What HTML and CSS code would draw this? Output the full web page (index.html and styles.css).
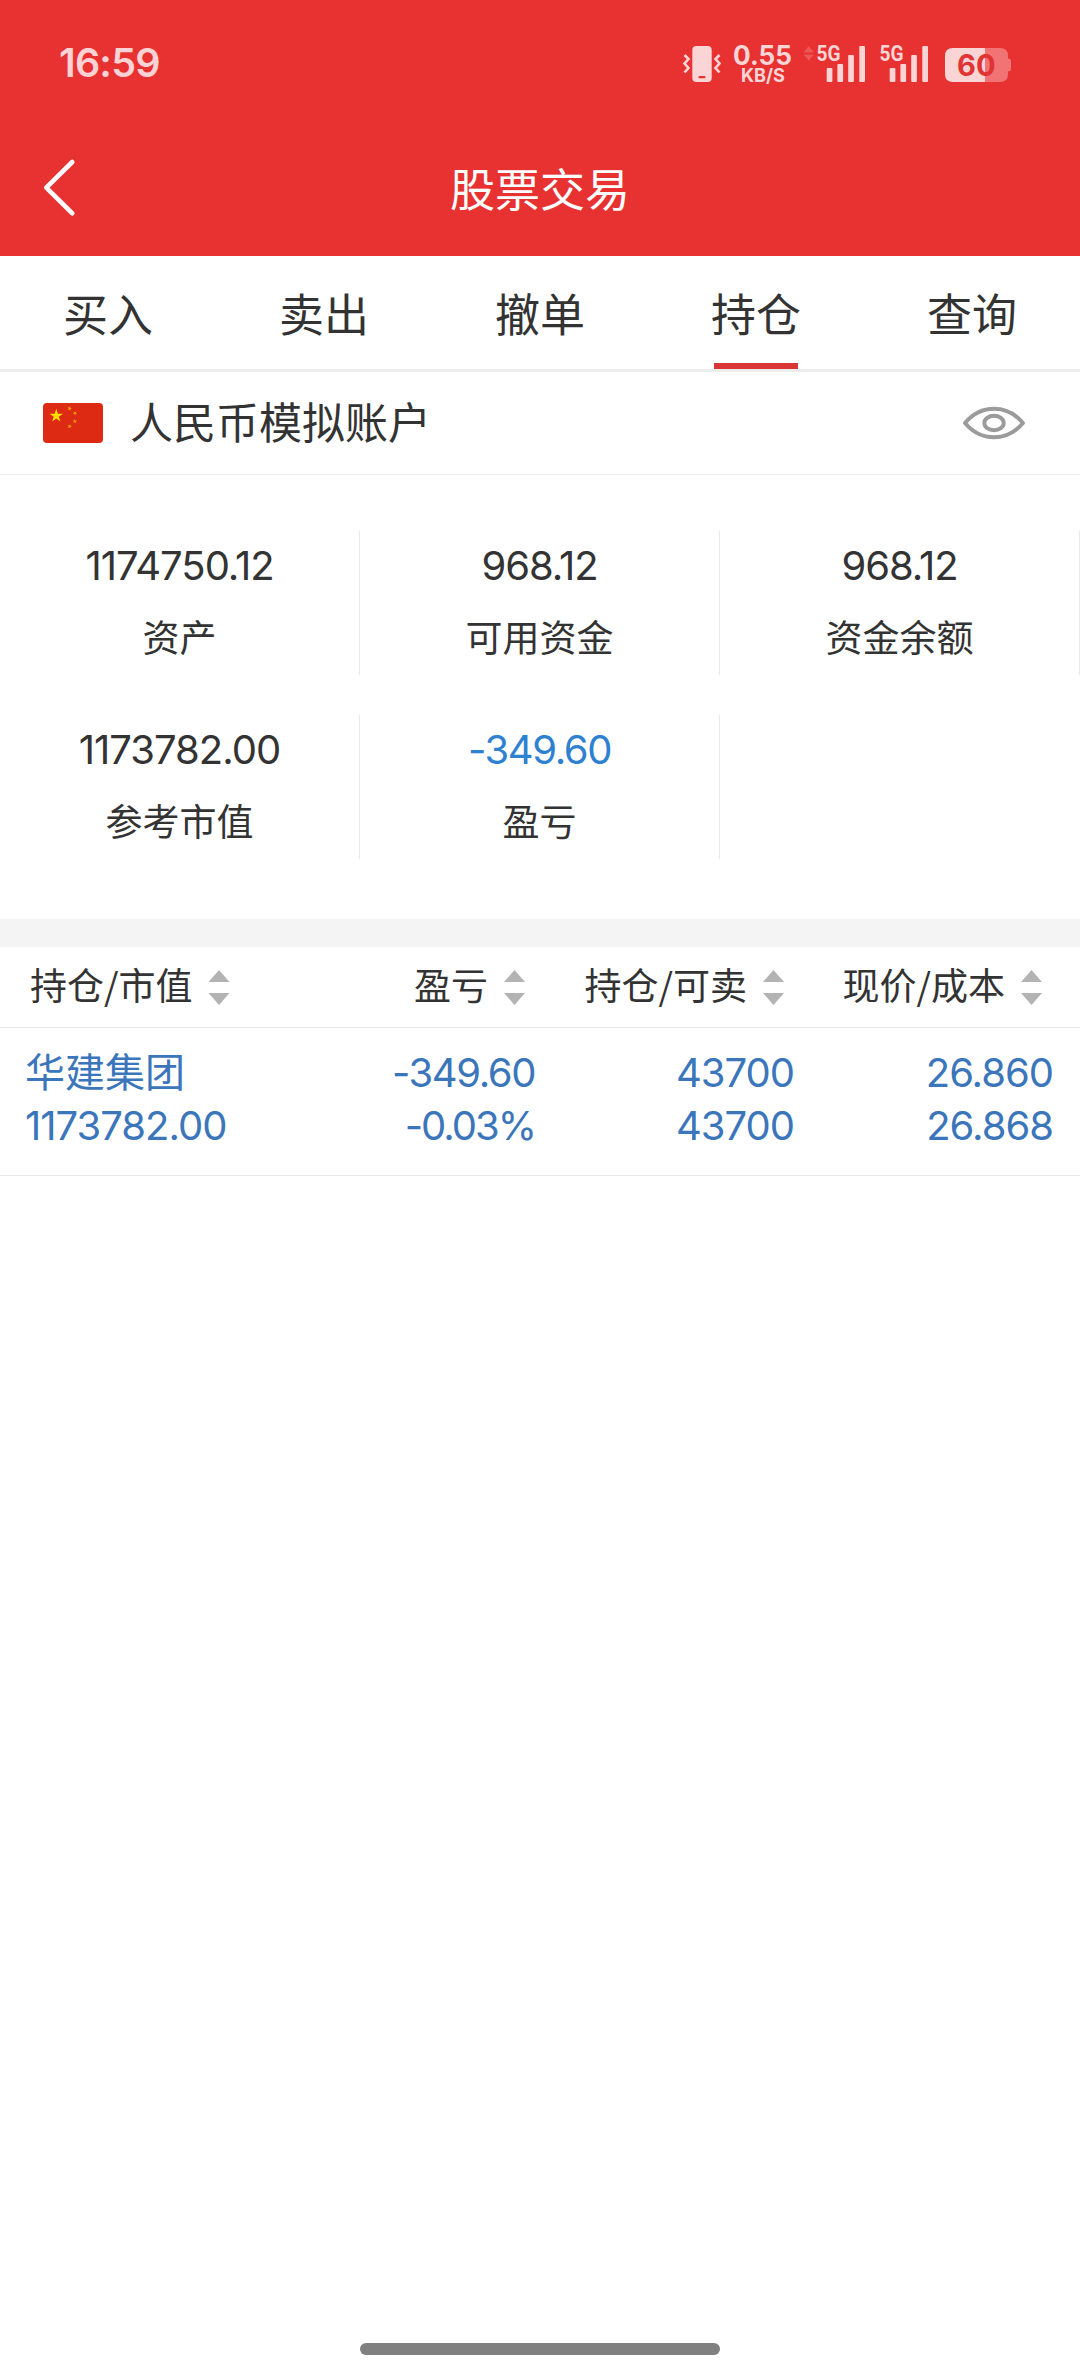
FILE: index.html
```html
<!DOCTYPE html>
<html lang="zh-CN">
<head>
<meta charset="utf-8">
<title>股票交易</title>
<link rel="stylesheet" href="styles.css">
</head>
<body>
<div class="screen">
  <header class="top">
    <div class="status">
      <span class="clock">16:59</span>
      <svg class="status-icons" width="340" height="50" viewBox="680 40 340 50">
        <rect x="692.3" y="46" width="19.4" height="36" rx="4" fill="#fbd5d5"/>
        <rect x="698.5" y="76" width="7" height="2.2" rx="1" fill="#e83131"/>
        <path d="M684.5 55l4 4-4 4.500 4 4.500-4 4.500M719.500 55l-4 4 4 4.500-4 4.500 4 4.500" fill="none" stroke="#fbd5d5" stroke-width="2.600"/>
        <text x="733" y="65.300" font-size="26.500" font-weight="700" textLength="59" lengthAdjust="spacingAndGlyphs">0.55</text>
        <text x="741" y="82" font-size="18.500" font-weight="700" textLength="44" lengthAdjust="spacingAndGlyphs">KB/S</text>
        <path d="M803.500 52.500l5.200-6.500 5.200 6.500zM803.500 54.500l5.200 6 5.200-6z" fill="#ee5757"/>
        <text class="net" x="816.500" y="61" font-size="21.500" font-weight="700" textLength="24" lengthAdjust="spacingAndGlyphs">5G</text>
        <g fill="#fbd5d5">
          <rect x="826.700" y="68" width="5.700" height="14" rx="1"/>
          <rect x="837.400" y="64" width="5.700" height="18" rx="1"/>
          <rect x="848.200" y="55" width="5.700" height="27" rx="1"/>
          <rect x="859.300" y="46" width="5.700" height="36" rx="1"/>
        </g>
        <text class="net" x="879.500" y="61" font-size="21.500" font-weight="700" textLength="24" lengthAdjust="spacingAndGlyphs">5G</text>
        <g fill="#fbd5d5">
          <rect x="889.700" y="68" width="5.700" height="14" rx="1"/>
          <rect x="900.400" y="64" width="5.700" height="18" rx="1"/>
          <rect x="911.200" y="55" width="5.700" height="27" rx="1"/>
          <rect x="922.300" y="46" width="5.700" height="36" rx="1"/>
        </g>
        <path d="M985 48h15q8 0 8 8v2.500q3 0 3 3v7q0 3-3 3v2.500q0 8-8 8h-15z" fill="#f17373"/>
        <path d="M985 48h-32q-8 0-8 8v18q0 8 8 8h32z" fill="#fbd5d5"/>
        <text class="level" x="957" y="76.300" font-size="30" font-weight="700" textLength="38.500" lengthAdjust="spacingAndGlyphs">60</text>
      </svg>
    </div>
    <div class="nav">
      <svg class="back" width="36" height="60" viewBox="40 158 36 60"><path d="M72.300 162L46.300 187.700l26 25.700" fill="none" stroke="#fff" stroke-width="4.600" stroke-linecap="round" stroke-linejoin="round"/></svg>
      <h1 class="title">股票交易</h1>
    </div>
  </header>

  <nav class="tabs">
    <a class="tab">买入</a>
    <a class="tab">卖出</a>
    <a class="tab">撤单</a>
    <a class="tab active">持仓</a>
    <a class="tab">查询</a>
  </nav>

  <section class="account">
    <svg class="flag" width="60" height="40" viewBox="43 403 60 40">
      <defs><path id="star" d="M0-1L.2245-.309.951-.309.363.118.588.809 0 .382-.588.809-.363.118-.951-.309-.2245-.309z"/></defs>
      <rect x="43" y="403" width="60" height="40" rx="4" fill="#dd2a12"/>
      <use href="#star" transform="translate(56.300 415.800) scale(7)" fill="#ffde00"/>
      <g fill="#f5990f">
        <use href="#star" transform="translate(69.600 408.500) rotate(20) scale(2.500)"/>
        <use href="#star" transform="translate(75 413.300) rotate(40) scale(2.500)"/>
        <use href="#star" transform="translate(74.800 421.300) scale(2.500)"/>
        <use href="#star" transform="translate(69.600 426.300) rotate(20) scale(2.500)"/>
      </g>
    </svg>
    <span class="account-name">人民币模拟账户</span>
    <svg class="eye" width="64" height="40" viewBox="962 409 64 40">
      <g fill="none" stroke="#9b9b9b" stroke-width="3.900" stroke-linejoin="round">
        <path d="M965 429C981 410 1007 410 1023 429C1007 448 981 448 965 429z"/>
        <ellipse cx="994" cy="429" rx="9.700" ry="7.200"/>
      </g>
    </svg>
  </section>

  <section class="summary">
    <div class="cell"><span class="value">1174750.12</span><span class="label">资产</span></div>
    <div class="cell"><span class="value">968.12</span><span class="label">可用资金</span></div>
    <div class="cell"><span class="value">968.12</span><span class="label">资金余额</span></div>
    <div class="cell"><span class="value">1173782.00</span><span class="label">参考市值</span></div>
    <div class="cell"><span class="value loss">-349.60</span><span class="label">盈亏</span></div>
  </section>

  <section class="holdings">
    <div class="row head">
      <div class="col c1">持仓/市值<i class="sort"></i></div>
      <div class="col c2">盈亏<i class="sort"></i></div>
      <div class="col c3">持仓/可卖<i class="sort"></i></div>
      <div class="col c4">现价/成本<i class="sort"></i></div>
    </div>
    <div class="row item">
      <div class="col c1"><span class="stock">华建集团</span><span class="num">1173782.00</span></div>
      <div class="col c2"><span class="num signed">-349.60</span><span class="num percent">-0.03%</span></div>
      <div class="col c3"><span class="num">43700</span><span class="num">43700</span></div>
      <div class="col c4"><span class="num">26.860</span><span class="num">26.868</span></div>
    </div>
  </section>

  <div class="home-bar"></div>
</div>
</body>
</html>
```
FILE: styles.css
```css
* { box-sizing: border-box; }
body {
  margin: 0;
  background: #fff;
  color: #333;
  font-family: "Noto Sans CJK SC", sans-serif;
}
.screen {
  width: 1080px;
  height: 2376px;
  display: flex;
  flex-direction: column;
  overflow: hidden;
}

.top { height: 256px; background: #e83131; }
.status {
  height: 119px;
  padding: 40px 60px 0 59px;
  display: flex;
  justify-content: space-between;
}
.clock {
  font: 600 39.5px/47px Inter, sans-serif;
  letter-spacing: -0.8px;
  color: #ffd3d3;
}
.status-icons text { font-family: Inter, sans-serif; fill: #fbd5d5; }
.status-icons .net { font-family: Roboto, sans-serif; }
.status-icons .level { fill: #e03434; }
.nav {
  height: 137px;
  padding: 0 40px;
  display: grid;
  grid-template-columns: 36px 1fr 36px;
  align-items: center;
}
.title {
  margin: 0;
  text-align: center;
  color: #fff;
  font-size: 45px;
  font-weight: 400;
  line-height: 60px;
}

.tabs {
  height: 116px;
  display: flex;
  border-bottom: 3px solid #ededed;
}
.tab {
  flex: 1;
  display: flex;
  flex-direction: column;
  align-items: center;
  font-size: 45px;
  line-height: 113px;
}
.tab.active::after {
  content: "";
  width: 84px;
  height: 6px;
  margin-top: -6px;
  background: #d93636;
}

.account {
  height: 103px;
  padding: 0 54px 0 43px;
  display: flex;
  align-items: center;
  border-bottom: 1px solid #eee;
}
.account-name {
  flex: 1;
  margin-left: 27px;
  padding-bottom: 7px;
  font-size: 43px;
  line-height: 60px;
}

.summary {
  height: 444px;
  padding-top: 56px;
  display: grid;
  grid-template-columns: repeat(3, 360px);
  grid-auto-rows: 144px;
  row-gap: 40px;
}
.cell {
  padding-top: 13px;
  display: flex;
  flex-direction: column;
  align-items: center;
  border-right: 1px solid #e9e9e9;
}
.value, .num {
  font-family: Inter, sans-serif;
  font-size: 40px;
  letter-spacing: -1px;
}
.value { line-height: 44px; }
.value.loss { color: #2e80d0; }
.value.loss, .num.signed { letter-spacing: -1.4px; }
.num.percent { letter-spacing: -2px; }
.label { margin-top: 24px; font-size: 37px; line-height: 49px; }

.holdings { border-top: 28px solid #f4f4f4; }
.row {
  display: grid;
  grid-template-columns: 275px 260px 259px 286px;
  border-bottom: 1px solid #e9e9e9;
}
.col { display: flex; }
.head { height: 81px; font-size: 37px; line-height: 74px; }
.head .col { justify-content: flex-end; padding-right: 10px; }
.head .c1 { justify-content: flex-start; padding-left: 30px; }
.head .c4 { padding-right: 38px; }
.sort {
  width: 21px;
  height: 35px;
  margin: 23px 0 0 16px;
  display: flex;
  flex-direction: column;
  justify-content: space-between;
}
.sort::before, .sort::after {
  content: "";
  height: 12px;
  background: #b3b3b3;
}
.sort::before { clip-path: polygon(50% 0, 100% 100%, 0 100%); }
.sort::after { clip-path: polygon(0 0, 100% 0, 50% 100%); }

.item { height: 148px; padding-top: 18px; color: #3b76bb; }
.item .col { flex-direction: column; align-items: flex-end; }
.item .c1 { align-items: flex-start; padding-left: 25px; }
.item .c4 { padding-right: 27px; }
.num { height: 53px; line-height: 53px; }
.stock { height: 53px; font-size: 40px; line-height: 49px; }

.home-bar {
  width: 360px;
  height: 12px;
  margin: auto auto 21px;
  border-radius: 6px;
  background: #808080;
}
```
